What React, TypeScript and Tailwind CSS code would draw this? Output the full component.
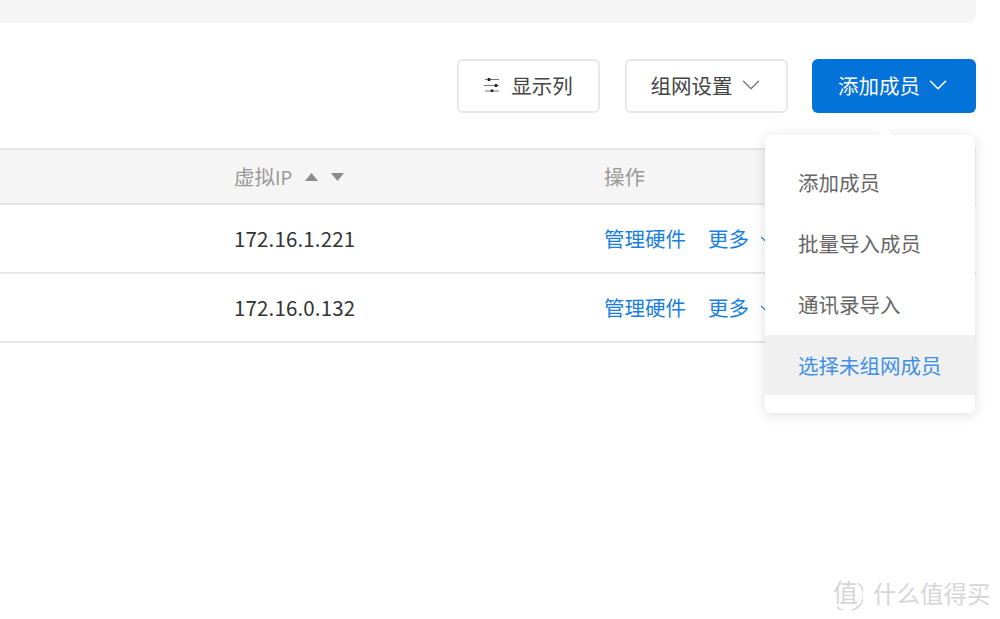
import { ReactNode } from "react";
import { ChevronDown } from "lucide-react";

const font = "font-['Noto_Sans_CJK_SC','Noto_Sans',sans-serif]";

function ToolButton({ className, children }: { className: string; children: ReactNode }) {
  return (
    <button className={`h-[54px] flex items-center justify-center rounded-[6px] text-[20.5px] ${className}`}>
      <span className="flex items-center -translate-y-[1px]">{children}</span>
    </button>
  );
}

function SlidersIcon() {
  return (
    <svg width="16" height="14" viewBox="0 0 16 14" fill="none" stroke="#777" strokeWidth="1">
      <path d="M1 1.5h14M0 7.5h15M1 13h14" />
      <g stroke="#222" strokeWidth="2.6">
        <path d="M5 0v3M12 6v3M8 11.5v3" />
      </g>
    </svg>
  );
}

function Row({ ip }: { ip: string }) {
  return (
    <div className="h-[69px] flex items-center pl-[234px] border-b-2 border-[#e6e6e6] text-[20.5px]">
      <div className="w-[370px] text-[#333] tracking-[0.15px]">{ip}</div>
      <div className="flex items-center text-[#1a7fe0]">
        <span>管理硬件</span>
        <span className="ml-[22px]">更多</span>
        <ChevronDown size={14} className="ml-[9px]" />
      </div>
    </div>
  );
}

function Menu() {
  const items = ["添加成员", "批量导入成员", "通讯录导入"];
  return (
    <div className="absolute left-[765px] top-[135px] w-[210px] h-[278px] pt-[17px] bg-white rounded-[6px] shadow-[0_2px_14px_rgba(0,0,0,0.13)] text-[20.5px]">
      <div className="absolute -top-[5px] left-[114px] w-[12px] h-[12px] rotate-45 bg-white" />
      {items.map((item) => (
        <div key={item} className="relative h-[61px] flex items-center pl-[33px] text-[#666]">
          {item}
        </div>
      ))}
      <div className="relative h-[60px] flex items-center pl-[33px] bg-[#f0f0f0] text-[#3f8fe6]">选择未组网成员</div>
    </div>
  );
}

export default function App() {
  return (
    <div className={`relative w-[1000px] h-[619px] overflow-hidden bg-white pr-[24px] ${font}`}>
      <div className="h-[23px] bg-[#f5f5f5] rounded-br-[8px]" />

      <div className="mt-[36px] flex justify-end">
        <ToolButton className="w-[143px] border-2 border-[#e8e8e8] bg-white text-[#444]">
          <SlidersIcon />
          <span className="ml-[11px]">显示列</span>
        </ToolButton>
        <ToolButton className="ml-[25px] w-[163px] border-2 border-[#e8e8e8] bg-white text-[#444]">
          <span>组网设置</span>
          <ChevronDown size={30} strokeWidth={1} className="ml-[3px] -mr-[3px] text-[#777]" />
        </ToolButton>
        <ToolButton className="ml-[24px] w-[164px] bg-[#0372d9] text-white">
          <span>添加成员</span>
          <ChevronDown size={30} strokeWidth={1.3} className="ml-[3px] -mr-[3px]" />
        </ToolButton>
      </div>

      <div className="mt-[35px]">
        <div className="h-[57px] flex items-center pl-[234px] bg-[#f5f5f5] border-y-2 border-[#e6e6e6] text-[20.5px] text-[#999]">
          <div className="w-[370px] flex items-center">
            <span>
              虚拟<span className="text-[18.5px]">IP</span>
            </span>
            <svg width="40" height="10" viewBox="0 0 40 10" className="ml-[13px]" fill="#8c8c8c">
              <path d="M0 9L6.5 1L13 9Z" />
              <path d="M26 1L39 1L32.5 9Z" />
            </svg>
          </div>
          <div>操作</div>
        </div>
        <Row ip="172.16.1.221" />
        <Row ip="172.16.0.132" />
      </div>

      <Menu />

      <div className="absolute left-[833px] top-[579px] flex items-center text-[#d6d6d6] whitespace-nowrap">
        <div className="relative w-[30px] h-[31px]">
          <span className="absolute left-0 top-0 text-[25px] leading-none">值</span>
          <svg width="30" height="31" viewBox="0 0 30 31" fill="none" stroke="#cfcfcf" strokeWidth="1.2" className="absolute left-0 top-0">
            <path d="M25 4a15 15 0 0 1-21 24" />
          </svg>
        </div>
        <span className="ml-[10px] -mt-[2px] text-[23.5px] leading-none">什么值得买</span>
      </div>
    </div>
  );
}
